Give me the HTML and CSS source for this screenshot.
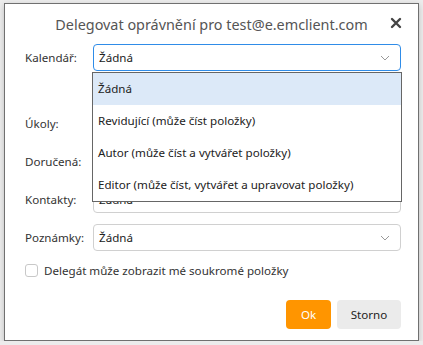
FILE: index.html
```html
<!DOCTYPE html>
<html>
    <head>
        <meta charset="utf-8">
        <title>Delegovat oprávnění</title>
        <link rel="stylesheet" href="styles.css">
    </head>
    <body>
        <div class="window">
            <div class="titleBar">
                <p class="title">Delegovat oprávnění pro test@e.emclient.com</p>
                <svg class="close" width="12" height="12" viewBox="0 0 12 12">
                    <path d="M2 2 L10 10 M10 2 L2 10" stroke="#444" stroke-width="2.4" stroke-linecap="round"/>
                </svg>
            </div>

            <div class="form">
                <div class="row">
                    <label class="label">Kalendář:</label>
                    <div class="select focused">
                        <span class="value">Žádná</span>
                        <svg class="chevron" width="10" height="6" viewBox="0 0 10 6"><path d="M1 1 L5 5 L9 1" fill="none" stroke="#999" stroke-width="1"/></svg>
                        <ul class="dropdown">
                            <li class="option active">Žádná</li>
                            <li class="option">Revidující (může číst položky)</li>
                            <li class="option">Autor (může číst a vytvářet položky)</li>
                            <li class="option">Editor (může číst, vytvářet a upravovat položky)</li>
                        </ul>
                    </div>
                </div>
                <div class="spacer"></div>
                <div class="row">
                    <label class="label">Úkoly:</label>
                    <div class="select"></div>
                </div>
                <div class="row">
                    <label class="label">Doručená:</label>
                    <div class="select"></div>
                </div>
                <div class="row">
                    <label class="label">Kontakty:</label>
                    <div class="select"><span class="value">Žádná</span></div>
                </div>
                <div class="row">
                    <label class="label">Poznámky:</label>
                    <div class="select">
                        <span class="value">Žádná</span>
                        <svg class="chevron" width="10" height="6" viewBox="0 0 10 6"><path d="M1 1 L5 5 L9 1" fill="none" stroke="#999" stroke-width="1"/></svg>
                    </div>
                </div>
                <div class="checkRow">
                    <span class="checkbox"></span>
                    <span class="checkText">Delegát může zobrazit mé soukromé položky</span>
                </div>
            </div>

            <div class="buttons">
                <button class="btn ok">Ok</button>
                <button class="btn cancel">Storno</button>
            </div>
        </div>
    </body>
</html>
```

FILE: styles.css
```css
* {
    margin: 0;
    padding: 0;
    box-sizing: border-box;
}

body {
    background-color: #ececec;
    font-family: 'Noto Sans', 'Open Sans', sans-serif;
    font-size: 11.6px;
    color: #333;
    overflow: hidden;
}

.window {
    width: 415px;
    height: 338px;
    margin: 3px 0 0 4px;
    background-color: white;
    border: 1px solid #707070;
    box-shadow: rgba(0, 0, 0, 0.2) 0px 2px 6px;
    display: flex;
    flex-flow: column nowrap;
}

.titleBar {
    height: 38px;
    display: flex;
    align-items: center;
    justify-content: center;
    position: relative;
}
.title {
    font-size: 14.4px;
    color: #555;
    padding-top: 2px;
}
.close {
    position: absolute;
    right: 16px;
    top: 13px;
}

.form {
    padding: 2px 17px 0 20px;
    display: flex;
    flex-flow: column nowrap;
}

.row {
    display: flex;
    align-items: center;
    height: 27px;
    margin-bottom: 11px;
}
.spacer {
    height: 28px;
}
.label {
    width: 68px;
    color: #333;
}

.select {
    flex: 1;
    height: 27px;
    border: 1px solid #d0d0d0;
    border-radius: 4px;
    display: flex;
    align-items: center;
    padding-left: 5px;
    position: relative;
    color: #222;
}
.select.focused {
    border-color: #2f8ce8;
}
.chevron {
    position: absolute;
    right: 10px;
    top: 10px;
}

.dropdown {
    list-style: none;
    position: absolute;
    top: 27px;
    left: -2px;
    right: -2px;
    background-color: white;
    border: 1px solid #666;
    z-index: 2;
}
.option {
    height: 32px;
    line-height: 32px;
    padding-left: 5px;
    color: #222;
}
.option.active {
    background-color: #dce9f8;
}

.checkRow {
    display: flex;
    align-items: center;
    margin-top: 1px;
}
.checkbox {
    width: 13px;
    height: 13px;
    border: 1px solid #c8c8c8;
    border-radius: 3px;
    margin-right: 6px;
}
.checkText {
    color: #333;
}

.buttons {
    margin-top: auto;
    margin-bottom: 11px;
    padding-right: 17px;
    display: flex;
    justify-content: flex-end;
}
.btn {
    height: 29px;
    border: none;
    border-radius: 4px;
    font-family: 'Noto Sans', 'Open Sans', sans-serif;
    font-size: 11.6px;
}
.ok {
    width: 45px;
    background-color: #ff9500;
    color: white;
    margin-right: 6px;
}
.cancel {
    width: 64px;
    background-color: #ebebeb;
    color: #222;
}
```
